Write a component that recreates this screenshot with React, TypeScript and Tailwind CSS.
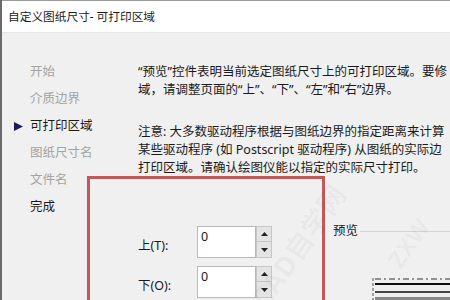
import React from "react";

const font = { fontFamily: '"Noto Sans", "Noto Sans CJK SC", sans-serif' };

function Spinner() {
  return (
    <div className="flex flex-col w-[16px] h-[32px]">
      <div className="h-[16px] bg-[#e4e4e4] border border-[#c6c6c6] flex items-center justify-center">
        <svg width="7" height="4" viewBox="0 0 7 4"><path d="M0 4 L3.5 0 L7 4 Z" fill="#222" /></svg>
      </div>
      <div className="h-[16px] bg-[#e4e4e4] border border-t-0 border-[#c6c6c6] flex items-center justify-center">
        <svg width="7" height="4" viewBox="0 0 7 4"><path d="M0 0 L3.5 4 L7 0 Z" fill="#222" /></svg>
      </div>
    </div>
  );
}

function Field({ label }: { label: string }) {
  return (
    <div className="flex items-center h-[32px]">
      <div className="w-[59px] text-[12.5px] text-[#1a1a1a] pt-[7px]">{label}</div>
      <div className="w-[59px] h-[32px] bg-white border border-[#b9b9b9] text-[12.5px] text-[#1a1a1a] pl-[3px] leading-[20px]">0</div>
      <Spinner />
    </div>
  );
}

export default function App() {
  const nav = [
    { t: "开始", c: "text-[#a3a3a3]" },
    { t: "介质边界", c: "text-[#a3a3a3]" },
    { t: "可打印区域", c: "text-[#1a1a1a]", active: true },
    { t: "图纸尺寸名", c: "text-[#a3a3a3]" },
    { t: "文件名", c: "text-[#a3a3a3]" },
    { t: "完成", c: "text-[#1a1a1a]" },
  ];
  return (
    <div className="relative w-[450px] h-[300px] overflow-hidden bg-[#f0f0f0] border-l-2 border-[#6a6a6a]" style={font}>
      <div className="h-[32px] bg-white border-t border-[#9a9a9a] flex items-center pl-[6px] text-[11.7px] text-[#1a1a1a]">
        自定义图纸尺寸- 可打印区域
      </div>
      <div className="flex border-t border-[#e6e6e6]">
        <div className="w-[136px] pt-[26px] shrink-0">
          {nav.map((n) => (
            <div key={n.t} className="relative h-[27px] flex items-center pl-[28px]">
              {n.active && (
                <svg className="absolute left-[12px] top-[9px]" width="9" height="9" viewBox="0 0 9 9">
                  <path d="M0 0 L9 4.5 L0 9 Z" fill="#1c1c5a" />
                </svg>
              )}
              <span className={`text-[12.5px] ${n.c}`}>{n.t}</span>
            </div>
          ))}
        </div>
        <div className="flex-1 pt-[30px] text-[12.5px] leading-[18px] text-[#1a1a1a] whitespace-nowrap">
          <p>“预览”控件表明当前选定图纸尺寸上的可打印区域。要修</p>
          <p>域，请调整页面的“上”、“下”、“左”和“右”边界。</p>
          <p className="mt-[24px]">注意: 大多数驱动程序根据与图纸边界的指定距离来计算</p>
          <p>某些驱动程序 (如 Postscript 驱动程序) 从图纸的实际边</p>
          <p>打印区域。请确认绘图仪能以指定的实际尺寸打印。</p>
          <div className="flex items-start mt-[49px]">
            <div className="flex flex-col gap-[8px]">
              <Field label="上(T):" />
              <Field label="下(O):" />
            </div>
            <div className="ml-[61px] flex-1 mt-[-4px]">
              <div className="flex items-center h-[18px]">
                <span>预览</span>
                <div className="flex-1 ml-[2px] h-[1px] bg-[#d4d4d4]" />
              </div>
              <svg className="block ml-[39px] mt-[38px]" width="80" height="24" viewBox="0 0 80 24">
                <line x1="1" y1="0" x2="1" y2="24" stroke="#555" strokeWidth="1" strokeDasharray="3 2" />
                <line x1="3" y1="1" x2="80" y2="1" stroke="#333" strokeWidth="1" strokeDasharray="6 3 2 3" />
                <line x1="3" y1="6" x2="80" y2="6" stroke="#111" strokeWidth="2" />
                <line x1="3" y1="14" x2="80" y2="14" stroke="#111" strokeWidth="1.5" />
                <rect x="3" y="19" width="77" height="5" fill="#8a8a8a" />
              </svg>
            </div>
          </div>
        </div>
      </div>
      <div className="absolute left-[85px] top-[176px] w-[238px] h-[140px] border-[3px] border-[#c05a5a] pointer-events-none" />
      <div aria-hidden="true" className="absolute left-[225px] top-[225px] -rotate-[55deg] text-[28px] font-bold text-[rgba(0,0,0,0.035)] whitespace-nowrap pointer-events-none">
        CAD自学网
      </div>
      <div aria-hidden="true" className="absolute left-[380px] top-[225px] -rotate-[55deg] text-[24px] font-bold text-[rgba(0,0,0,0.035)] whitespace-nowrap pointer-events-none">
        ZXW
      </div>
    </div>
  );
}
